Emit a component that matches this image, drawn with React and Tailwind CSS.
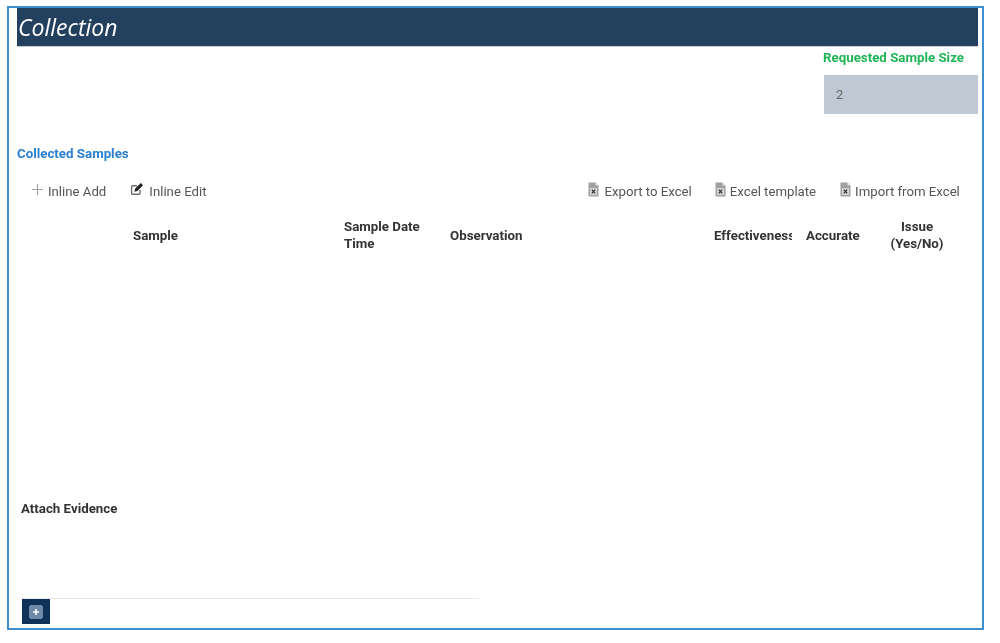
const ROBOTO = "font-['Roboto',sans-serif]"

function PlusIcon() {
  return (
    <svg width="13" height="13" viewBox="0 0 13 13" className="shrink-0 mb-[5px]">
      <path d="M6.5 1v11M1 6.5h11" stroke="#a3a3a3" strokeWidth="1.2" />
    </svg>
  )
}

function EditIcon() {
  return (
    <svg width="14" height="14" viewBox="0 0 14 14" className="shrink-0 mb-[5px]">
      <path d="M10 8v3.2a1 1 0 0 1-1 1H2.6a1 1 0 0 1-1-1V4.8a1 1 0 0 1 1-1H7" fill="none" stroke="#6b6b6b" strokeWidth="1.4" />
      <path d="M4.4 9.8l.6-3L10.8 1l2.2 2.2-5.6 5.8z" fill="#222" />
    </svg>
  )
}

function ExcelIcon() {
  return (
    <svg width="11" height="15" viewBox="0 0 11 15" className="shrink-0 mb-[5px]">
      <path d="M0.5 0.5h7l3 3v11h-10z" fill="#a0a0a0" />
      <path d="M7.5 0.5l3 3h-3z" fill="#e6e6e6" />
      <rect x="2" y="6" width="7" height="7" fill="#d6d6d6" />
      <path d="M3.8 7.6l3.4 3.8M7.2 7.6l-3.4 3.8" stroke="#2b2b2b" strokeWidth="1.2" />
    </svg>
  )
}

function ToolButton({ icon, label, className = '' }) {
  return (
    <div className={`flex items-center text-[13.2px] text-[#555] ${className}`}>
      {icon}
      <span>{label}</span>
    </div>
  )
}

export default function App() {
  return (
    <div className={`h-[643px] w-[1000px] overflow-hidden bg-white pt-[6px] pl-[7px] ${ROBOTO}`}>
      <div className="flex h-[624px] w-[977px] flex-col border-2 border-[#3d8fd1] blur-[0.4px]">
        {/* Header */}
        <div className="ml-[8px] mr-[4px] flex h-[39px] shrink-0 items-center border-b border-[#c5ccd4] bg-[#23405f] pl-[1px]">
          <h1 className="font-['Open_Sans',sans-serif] text-[23px] font-medium italic text-white">Collection</h1>
        </div>

        {/* Requested sample size */}
        <div className="mr-[4px] flex shrink-0 flex-col items-end">
          <div className="w-[154px]">
            <p className="mt-[2px] -ml-px h-[18px] text-[13.3px] leading-[18px] font-bold whitespace-nowrap text-[#1fb556]">
              Requested Sample Size
            </p>
            <div className="mt-[8px] flex h-[39px] items-center bg-[#bfc9d3] pl-[12px] text-[13px] text-[#666]">2</div>
          </div>
        </div>

        {/* Collected samples */}
        <p className="mt-[31px] ml-[8px] h-[18px] text-[13.3px] leading-[18px] font-bold text-[#2a7fd0]">
          Collected Samples
        </p>

        {/* Toolbar */}
        <div className="mt-[17px] flex h-[24px] items-center">
          <ToolButton icon={<PlusIcon />} label="Inline Add" className="ml-[22px] gap-[4px]" />
          <ToolButton icon={<EditIcon />} label="Inline Edit" className="ml-[24px] gap-[5px]" />
          <ToolButton icon={<ExcelIcon />} label="Export to Excel" className="ml-[382px] gap-[5px]" />
          <ToolButton icon={<ExcelIcon />} label="Excel template" className="ml-[23px] gap-[4px]" />
          <ToolButton icon={<ExcelIcon />} label="Import from Excel" className="ml-[24px] gap-[4px]" />
        </div>

        {/* Table header */}
        <div className="mt-[10px] grid h-[42px] grid-cols-[116px_211px_106px_264px_92px_80px_62px] items-center pl-[8px] text-[13.3px] leading-[17px] font-bold text-[#333]">
          <div />
          <div>Sample</div>
          <div>
            Sample Date
            <br />
            Time
          </div>
          <div>Observation</div>
          <div className="w-[78px] overflow-hidden whitespace-nowrap">Effectiveness</div>
          <div>Accurate</div>
          <div className="text-center">
            Issue
            <br />
            (Yes/No)
          </div>
        </div>

        {/* Attach evidence */}
        <p className="mt-[244px] ml-[12px] h-[18px] text-[13.3px] leading-[18px] font-bold text-[#333]">Attach Evidence</p>

        <div className="mt-[80px] ml-[13px] w-[457px] border-t border-[#e8e8e8]">
          <div className="flex h-[25px] w-[28px] items-center justify-center bg-[#0f3358]">
            <div className="flex h-[14px] w-[14px] items-center justify-center rounded-[2px] bg-[#6f8aa6]">
              <svg width="8" height="8" viewBox="0 0 8 8">
                <path d="M4 1v6M1 4h6" stroke="#fff" strokeWidth="1.6" />
              </svg>
            </div>
          </div>
        </div>
      </div>
    </div>
  )
}
